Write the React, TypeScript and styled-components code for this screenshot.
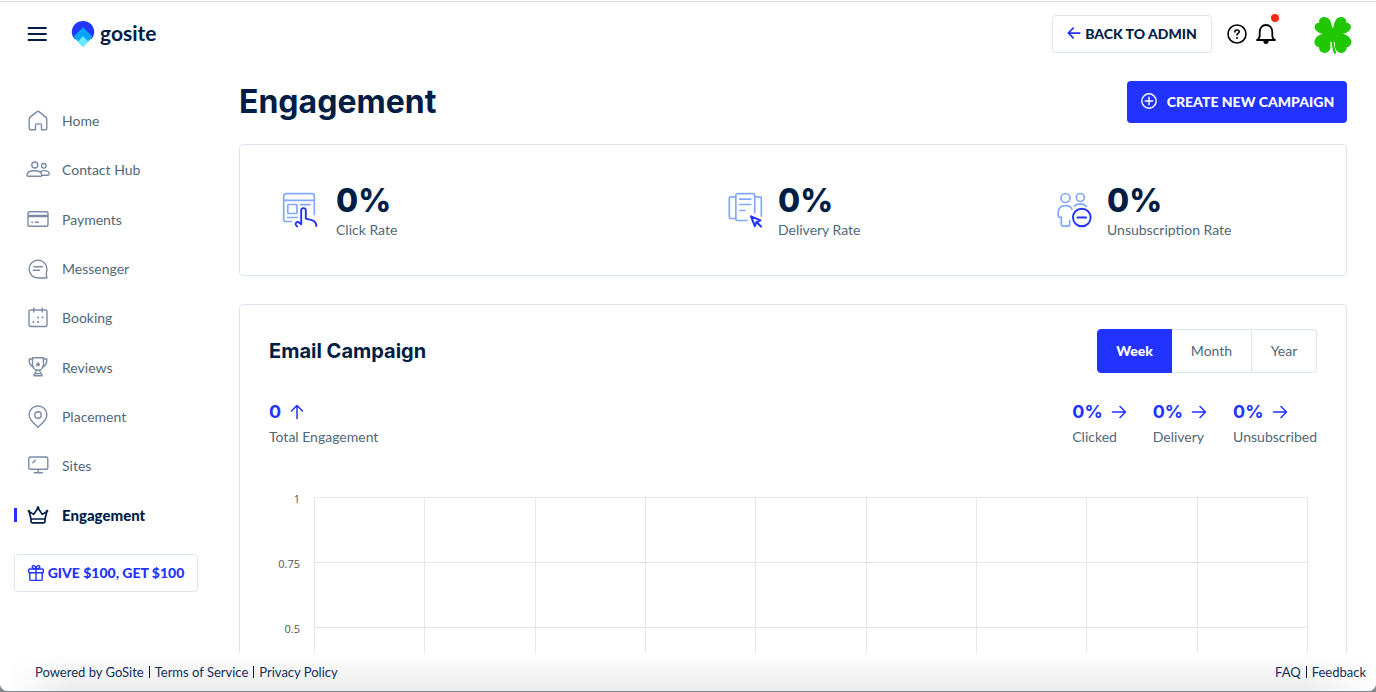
import React, { useState } from "react";
import styled, { createGlobalStyle } from "styled-components";

const color = {
  navy: "#001e45",
  blue: "#2233ff",
  slate: "#4f6878",
  icon: "#7c8ba5",
  line: "#dde5ee",
  grid: "#e6e6e6",
};

const headingFont = `Inter, "Liberation Sans", sans-serif`;

const GlobalStyle = createGlobalStyle`
  * { box-sizing: border-box; }
  body {
    margin: 0;
    background: #85878c;
    color: ${color.navy};
    font-family: Lato, "Liberation Sans", sans-serif;
    font-size: 14px;
  }
  button { font-family: inherit; cursor: pointer; }
  a { color: inherit; text-decoration: none; }
  h1, h2, p, ul { margin: 0; padding: 0; }
`;

const Page = styled.div`
  display: flex;
  flex-direction: column;
  height: calc(100vh - 1px);
  overflow: hidden;
  background: #fff;
  border-top: 1px solid #fff;
  border-radius: 0 0 8px 8px;
`;

const Header = styled.header`
  display: flex;
  align-items: center;
  flex: none;
  height: 68px;
  padding: 0 24px 4px 27px;
  border-top: 1px solid #d9dddc;
`;

const IconButton = styled.button`
  display: flex;
  padding: 0;
  border: 0;
  background: none;
  color: ${color.navy};
`;

const Logo = styled.a`
  display: flex;
  align-items: center;
  gap: 5px;
  margin-left: 24px;
  font-size: 21px;
  line-height: 26px;
  font-weight: 700;
  span { padding-bottom: 2px; }
`;

const HeaderActions = styled.div`
  display: flex;
  align-items: center;
  margin-left: auto;
`;

const OutlineButton = styled.button<{ $tone: string; $width: number }>`
  display: flex;
  align-items: center;
  justify-content: center;
  gap: 4px;
  width: ${(p) => p.$width}px;
  height: 38px;
  padding: 0 0 1px;
  border: 1px solid ${color.line};
  border-radius: 4px;
  background: #fff;
  color: ${(p) => p.$tone};
  font-size: 14px;
  font-weight: 900;
  svg { color: ${color.blue}; }
`;

const HelpButton = styled(IconButton)`
  margin-left: 14px;
  color: #000;
`;

const BellButton = styled(IconButton)`
  position: relative;
  margin: 0 37px 0 7px;
  color: #000;
`;

const Dot = styled.span`
  position: absolute;
  top: -9px;
  right: -2px;
  width: 8px;
  height: 8px;
  border-radius: 50%;
  background: #ff2a12;
`;

const Body = styled.div`
  display: flex;
  flex: 1;
  min-height: 0;
`;

const Sidebar = styled.aside`
  flex: none;
  width: 239px;
  padding: 27px 40px 0 14px;
`;

const NavList = styled.ul`
  display: flex;
  flex-direction: column;
  height: 444px;
  list-style: none;
`;

const NavItem = styled.li`
  display: flex;
  flex: 1;
`;

const NavLink = styled.a<{ $active: boolean }>`
  display: flex;
  align-items: center;
  flex: 1;
  color: ${(p) => (p.$active ? color.navy : color.slate)};
  font-size: ${(p) => (p.$active ? 15 : 14)}px;
  font-weight: ${(p) => (p.$active ? 900 : 400)};
  &::before {
    content: "";
    width: 3px;
    height: 14px;
    margin-right: 9px;
    background: ${(p) => (p.$active ? color.blue : "transparent")};
  }
  svg {
    margin-right: 12px;
    color: ${(p) => (p.$active ? color.navy : color.icon)};
  }
`;

const GiftRow = styled.div`
  padding-top: 14px;
`;

const Main = styled.main`
  flex: 1;
  min-width: 0;
  overflow: hidden;
  padding: 12px 29px 0 0;
`;

const TitleRow = styled.div`
  display: flex;
  align-items: center;
  justify-content: space-between;
  height: 42px;
  margin-bottom: 21px;
`;

const Title = styled.h1`
  padding-bottom: 1px;
  font-family: ${headingFont};
  font-size: 32px;
  line-height: 40px;
  font-weight: 700;
`;

const PrimaryButton = styled.button`
  display: flex;
  align-items: center;
  justify-content: center;
  gap: 9px;
  width: 220px;
  height: 42px;
  padding: 0 0 2px;
  border: 0;
  border-radius: 4px;
  background: ${color.blue};
  color: #fff;
  font-size: 14px;
  font-weight: 900;
`;

const Card = styled.section`
  border: 1px solid ${color.line};
  border-radius: 4px;
  background: #fff;
`;

const RatesCard = styled(Card)`
  display: grid;
  grid-template-columns: 446fr 329fr 247fr;
  align-items: center;
  height: 132px;
  margin-bottom: 28px;
  padding: 0 42px;
`;

const Rate = styled.div`
  display: flex;
  align-items: center;
  gap: 15px;
`;

const RateValue = styled.p`
  padding-top: 2px;
  font-family: ${headingFont};
  font-size: 32px;
  line-height: 38px;
  font-weight: 800;
`;

const Label = styled.p`
  color: ${color.slate};
  font-size: 14px;
  line-height: 20px;
`;

const CampaignCard = styled(Card)`
  padding: 24px 29px 40px;
`;

const CardHead = styled.div`
  display: flex;
  align-items: center;
  justify-content: space-between;
  margin-bottom: 28px;
`;

const CardTitle = styled.h2`
  padding-bottom: 1px;
  font-family: ${headingFont};
  font-size: 20px;
  line-height: 24px;
  font-weight: 700;
`;

const Periods = styled.div`
  display: grid;
  grid-template-columns: 75px 80px 65px;
  height: 44px;
`;

const Period = styled.button<{ $active: boolean }>`
  padding: 0 0 2px;
  border: 1px solid ${(p) => (p.$active ? color.blue : color.line)};
  border-left-width: ${(p) => (p.$active ? 1 : 0)}px;
  background: ${(p) => (p.$active ? color.blue : "#fff")};
  color: ${(p) => (p.$active ? "#fff" : color.slate)};
  font-size: 14px;
  font-weight: ${(p) => (p.$active ? 900 : 400)};
  &:first-child { border-radius: 4px 0 0 4px; }
  &:last-child { border-radius: 0 4px 4px 0; }
`;

const Totals = styled.div`
  display: flex;
  justify-content: space-between;
  margin-bottom: 50px;
`;

const TotalsGroup = styled.div`
  display: flex;
  gap: 26px;
`;

const TotalValue = styled.p`
  display: flex;
  align-items: center;
  gap: 8px;
  margin-bottom: 4px;
  color: ${color.blue};
  font-family: ${headingFont};
  font-size: 18px;
  line-height: 22px;
  font-weight: 700;
`;

const Chart = styled.div`
  display: flex;
  gap: 14px;
  padding-right: 9px;
`;

const Axis = styled.div`
  flex: none;
  width: 31px;
  color: #555;
  font-family: "Open Sans", sans-serif;
  font-size: 11px;
  line-height: 16px;
  text-align: right;
`;

const Tick = styled.div`
  display: flex;
  justify-content: flex-end;
  height: 65px;
  span { margin-top: -6px; }
`;

const Plot = styled.div`
  display: grid;
  flex: 1;
  grid-template-columns: repeat(9, 1fr);
  grid-auto-rows: 65px;
  border-right: 1px solid ${color.grid};
  border-bottom: 1px solid ${color.grid};
`;

const Cell = styled.div`
  border-top: 1px solid ${color.grid};
  border-left: 1px solid ${color.grid};
`;

const Footer = styled.footer`
  display: flex;
  align-items: center;
  justify-content: space-between;
  flex: none;
  height: 38px;
  padding: 0 10px 0 35px;
  background:
    linear-gradient(90deg, #fff 8px, transparent 70px, transparent calc(100% - 76px), #fff),
    linear-gradient(180deg, #fff, #ebebeb);
  color: #12305a;
  font-size: 13px;
`;

const FooterLinks = styled.div`
  display: flex;
  align-items: center;
  gap: 5px;
`;

const Bar = styled.span`
  width: 1px;
  height: 12px;
  background: ${color.navy};
`;

type SvgProps = { size?: number; w?: number; h?: number; box?: string; sw?: number; children: React.ReactNode };

const Svg = ({ size = 24, w, h, box = "0 0 24 24", sw = 1.4, children }: SvgProps) => (
  <svg
    width={w ?? size}
    height={h ?? size}
    viewBox={box}
    fill="none"
    stroke="currentColor"
    strokeWidth={sw}
    strokeLinecap="round"
    strokeLinejoin="round"
    aria-hidden="true"
  >
    {children}
  </svg>
);

const HomeIcon = () => (
  <Svg><path d="M3.200 10.200c0-.9.3-1.500 1-2.100l6.900-5.500c.6-.4 1.200-.4 1.800 0l6.900 5.500c.7.6 1 1.200 1 2.100v9c0 1-.6 1.500-1.500 1.500h-3.800v-4.500c0-.9-.3-1.300-1.200-1.300h-3.600c-.9 0-1.200.4-1.200 1.300v4.500H4.700c-.9 0-1.500-.5-1.500-1.500z" /></Svg>
);
const ContactsIcon = () => (
  <Svg>
    <circle cx="8.800" cy="7" r="3" />
    <circle cx="17.800" cy="7.800" r="2.300" />
    <path d="M1 17.200c0-3 3.200-4.400 7.400-4.400s7.400 1.400 7.400 4.400c0 .7-.5 1.100-1.200 1.100H2.200c-.7 0-1.200-.4-1.200-1.100z" />
    <path d="M14.600 13.600c1-.7 2.200-1 3.600-1 2.900 0 5 1.500 5 3.500 0 .7-.4 1.100-1.100 1.100h-6.200" />
  </Svg>
);
const CardIcon = () => (
  <Svg>
    <rect x="2" y="4.800" width="20" height="14.400" rx="1.800" />
    <path d="M2 9h20" strokeWidth="2.600" strokeLinecap="butt" />
    <path d="M5.800 15.300h.6M9.400 15.300h3" />
  </Svg>
);
const MessengerIcon = () => (
  <Svg>
    <path d="M20.900 12.100A8.900 8.900 0 1 0 12 21h8.200c.6 0 .9-.4.7-.9-.5-1.200-.8-2-.6-3.500.4-1.400.6-2.900.6-4.500z" />
    <path d="M8 9.700h8.500M7.200 13.300h6.300" />
  </Svg>
);
const BookingIcon = () => (
  <Svg>
    <rect x="3" y="4" width="18" height="16.500" rx="1.500" />
    <path d="M7.800 2v4M16.200 2v4" />
    <path d="M12 11.500h.1M16.500 11.500h.1M7.300 16h.1M12 16h.1" strokeWidth="2" />
  </Svg>
);
const TrophyIcon = () => (
  <Svg>
    <path d="M6.500 2.800h11v6.400c0 3.600-2.300 6.100-5.500 6.100s-5.500-2.500-5.500-6.100z" />
    <path d="M6.500 4H3.200c-.3 3.600 1 6.800 4.500 8.200M17.500 4h3.300c.3 3.600-1 6.800-4.500 8.200" />
    <path d="M10.300 15.300c0 1.400-.3 2.400-1.500 3.200M13.700 15.300c0 1.400.3 2.400 1.500 3.200M8 20.800c0-1.400.5-2.200 1.500-2.200h5c1 0 1.500.8 1.500 2.200z" />
    <path d="M12 7.500l.6 1.300 1.400.1-1.100.9.4 1.400-1.300-.8-1.300.8.4-1.400-1.100-.9 1.400-.1z" fill="currentColor" strokeWidth=".8" />
  </Svg>
);
const PinIcon = () => (
  <Svg>
    <path d="M12 22.300c-1.700-2.100-8.900-6.800-8.900-12.400a8.900 8.900 0 0 1 17.800 0c0 5.600-7.200 10.300-8.900 12.400z" />
    <circle cx="12" cy="10" r="3.200" />
  </Svg>
);
const SitesIcon = () => (
  <Svg>
    <rect x="2.800" y="3" width="19" height="12.300" rx="1.500" />
    <path d="M12.300 15.500v2.900M8.200 18.700h8.200M6.800 8.800l2.600-2.600" />
  </Svg>
);
const CrownIcon = () => (
  <Svg sw={1.700}>
    <path d="M5 16L3.200 8.600l4.500 2.800L12 5l4.300 6.400 4.500-2.800L19 16zM5 16v2.600c0 .8.5 1.200 1.300 1.200h11.400c.8 0 1.300-.4 1.300-1.200V16" />
    <circle cx="12" cy="4.600" r=".6" /><circle cx="2.900" cy="8.100" r=".4" /><circle cx="21.100" cy="8.100" r=".4" />
  </Svg>
);
const GiftIcon = () => (
  <Svg w={16} h={18} box="1 0 16 18" sw={1.400}>
    <rect x="1.700" y="5" width="14.600" height="3.800" rx=".8" />
    <path d="M2.800 8.800v6.400c0 .8.4 1.200 1.200 1.200h10c.8 0 1.200-.4 1.200-1.200V8.800M9 5v11.400" />
    <path d="M9 4.900C7.500 4.900 5.200 4.700 5.200 3.100 5.200 1 8.600.8 9 4.900zM9 4.900c1.500 0 3.800-.2 3.800-1.800C12.800 1 9.400.8 9 4.900z" />
  </Svg>
);

const MenuIcon = () => (
  <Svg w={20} h={20} box="0 0 20 20" sw={1.800}><path d="M1.500 4h17.500M1.500 10h17.500M1.500 16h17.500" /></Svg>
);
const LogoMark = () => (
  <svg width="24" height="28" viewBox="0 0 24 28" aria-hidden="true">
    <path d="M12 1A11 11 0 0 0 3.900 19.600L12 11.500l8.100 8.100A11 11 0 0 0 12 1z" fill="#2238ff" />
    <path d="M12 7.200L2.700 16.500c.4.900 1 1.700 1.700 2.500l3 3L12 17l4.600 5 3-3c.7-.8 1.300-1.600 1.700-2.500z" fill="#08a5ff" />
    <path d="M12 16.200L6.600 21.700 12 27.300l5.400-5.600z" fill="#64eaff" />
  </svg>
);
const ArrowIcon = ({ turn = 0, size = 16 }: { turn?: number; size?: number }) => (
  <Svg size={size} box="0 0 16 16" sw={size < 16 ? 2 : 1.5}>
    <path transform={`rotate(${turn} 8 8)`} d="M1.500 8h13M9 2.500L14.500 8 9 13.500" />
  </Svg>
);
const HelpIcon = () => (
  <Svg size={22} box="0 0 22 22" sw={1.600}>
    <circle cx="11" cy="11" r="9" />
    <path d="M8.800 8.900c.1-1.200.9-1.900 2.200-1.900s2.200.7 2.200 1.800c0 1.500-2.200 1.600-2.200 3.200" />
    <path d="M11 14.900h.01" strokeWidth="2" />
  </Svg>
);
const BellIcon = () => (
  <Svg size={22} box="0 0 22 22" sw={1.800}>
    <path d="M2 17h18c-1.800-1-2.700-2.200-2.700-4.500V9c0-4-2.400-7-6.300-7S4.700 5 4.700 9v3.500C4.700 14.800 3.800 16 2 17z" />
    <path d="M9.200 18.500h3.600c-.2 1.200-.8 1.700-1.800 1.700s-1.600-.5-1.800-1.700z" fill="currentColor" />
  </Svg>
);
const Clover = () => (
  <svg width="38" height="42" viewBox="0 -3 38 42" role="img" aria-label="Account">
    <g fill="#22c703">
      <path d="M18.500 19C11 19 2.600 17.500.9 12.600-.2 9 2 6.700 5.200 6.700 4.600 3.600 7 1 10.700 1.100 17 1.600 18.500 9 18.500 19z" />
      <path d="M19 19c7.500 0 16-1.500 17.600-6.400 1.100-3.600-1.100-5.900-4.300-5.900.6-3.100-1.800-5.700-5.500-5.600C20.500 1.600 19 9 19 19z" />
      <path d="M18.500 17C11 16 2.500 18.500.6 24.500c-.8 3.400 1.200 6.500 4.500 6.800-.1 3.700 2.700 6 6.200 5.600 6-.9 7.200-9 7.200-19.900z" />
      <path d="M19 17c7.500-1 16.300 1.500 18.200 7.500.8 3.400-1.200 6.500-4.500 6.800.1 3.700-2.700 6-6.200 5.600-5.700-.9-7.500-9-7.500-19.900z" />
      <circle cx="18.800" cy="17.500" r="6" />
    </g>
    <path d="M18.600 26c-.3 5 .3 8 2.200 12" fill="none" stroke="#fff" strokeWidth="4.500" />
    <path d="M18.800 18c-.8 8 .2 14 2.600 19.600" fill="none" stroke="#22c703" strokeWidth="2.200" />
  </svg>
);
const PlusIcon = () => (
  <Svg size={18} box="0 0 18 18" sw={1.400}><circle cx="9" cy="9" r="7.200" /><path d="M9 5.300v7.400M5.300 9h7.400" /></Svg>
);

const ClickIcon = () => (
  <Svg w={39} h={36} box="0 0 39 36" sw={1.700}>
    <g stroke="#82a8ff">
      <path d="M9.500 29.500H4c-1.500 0-2.300-.8-2.300-2.300V4c0-1.500.8-2.300 2.300-2.300h26c1.500 0 2.300.8 2.300 2.300v18.500M1.700 8.300h30.600" />
      <rect x="5.800" y="12.500" width="9.200" height="9" rx=".8" />
      <path d="M18.500 12.700h9.500M5.800 25.500h9.500" />
    </g>
    <path stroke="#2233ff" strokeWidth="1.900" d="M15.200 34.500c-1.600-1-2-2.700-1-3.800 1-1 2.300-.7 3.500.3l1.500 1.200V18.500c0-3.200 4.600-3.200 4.600 0v8.200l6 1.500c3.300.9 4.500 2.500 4.500 5.800" />
  </Svg>
);
const DeliveryIcon = () => (
  <Svg w={35} h={36} box="0 0 35 36" sw={1.700}>
    <g stroke="#82a8ff">
      <path d="M19 28.500H9.500c-1 0-1.700-.7-1.700-1.700V3.400c0-1 .7-1.700 1.700-1.700h15.500c1 0 1.700.7 1.700 1.700v17.400" />
      <path d="M7.800 26.500H3c-1 0-1.700-.7-1.700-1.700V6.500c0-1 .7-1.700 1.700-1.700h4.800M26.700 4.800h4.900c1 0 1.700.7 1.700 1.700v17.500" />
      <path d="M11.700 7.200h11M11.700 12.500h11M11.700 18.500h5" />
    </g>
    <path stroke="#2233ff" strokeWidth="2" d="M23 24.300l9.500 4-4 1.700-1.700 4.200zM29 30.500l4 4" />
  </Svg>
);
const UnsubscribeIcon = () => (
  <Svg w={35} h={36} box="0 0 35 36" sw={1.700}>
    <g stroke="#82a8ff">
      <circle cx="8.500" cy="6" r="4.500" />
      <circle cx="23.300" cy="5.500" r="4" />
      <path d="M15 17.300c-1-2.700-3.300-3.700-6.500-3.700-4.700 0-7.300 2.500-7.300 7v3.200c0 1 .6 1.500 1.700 1.500h1.400v7c0 1.200.6 1.900 1.800 1.900h4.800c1.200 0 1.800-.7 1.800-1.900v-4" />
      <path d="M17.500 14.200c1.200-1.600 3.200-2.400 5.800-2.400s4.600.8 6 2.700" />
    </g>
    <g stroke="#2233ff" strokeWidth="1.900"><circle cx="24.800" cy="25.500" r="8.800" /><path d="M20.500 25.500h8.600" /></g>
  </Svg>
);

const navItems = [
  { label: "Home", Icon: HomeIcon },
  { label: "Contact Hub", Icon: ContactsIcon },
  { label: "Payments", Icon: CardIcon },
  { label: "Messenger", Icon: MessengerIcon },
  { label: "Booking", Icon: BookingIcon },
  { label: "Reviews", Icon: TrophyIcon },
  { label: "Placement", Icon: PinIcon },
  { label: "Sites", Icon: SitesIcon },
  { label: "Engagement", Icon: CrownIcon },
];

const rates = [
  { label: "Click Rate", Icon: ClickIcon },
  { label: "Delivery Rate", Icon: DeliveryIcon },
  { label: "Unsubscription Rate", Icon: UnsubscribeIcon },
];

const periods = ["Week", "Month", "Year"];
const ticks = ["1", "0.75", "0.5"];

export default function App() {
  const [period, setPeriod] = useState("Week");

  return (
    <>
      <GlobalStyle />
      <Page>
        <Header>
          <IconButton aria-label="Menu"><MenuIcon /></IconButton>
          <Logo href="#home"><LogoMark /><span>gosite</span></Logo>
          <HeaderActions>
            <OutlineButton $tone={color.navy} $width={160}>
              <ArrowIcon turn={180} size={14} />BACK TO ADMIN
            </OutlineButton>
            <HelpButton aria-label="Help"><HelpIcon /></HelpButton>
            <BellButton aria-label="Notifications"><BellIcon /><Dot /></BellButton>
            <Clover />
          </HeaderActions>
        </Header>

        <Body>
          <Sidebar>
            <nav>
              <NavList>
                {navItems.map(({ label, Icon }) => (
                  <NavItem key={label}>
                    <NavLink href="#nav" $active={label === "Engagement"}><Icon />{label}</NavLink>
                  </NavItem>
                ))}
              </NavList>
            </nav>
            <GiftRow>
              <OutlineButton $tone={color.blue} $width={184}><GiftIcon />GIVE $100, GET $100</OutlineButton>
            </GiftRow>
          </Sidebar>

          <Main>
            <TitleRow>
              <Title>Engagement</Title>
              <PrimaryButton><PlusIcon />CREATE NEW CAMPAIGN</PrimaryButton>
            </TitleRow>

            <RatesCard>
              {rates.map(({ label, Icon }) => (
                <Rate key={label}>
                  <Icon />
                  <div>
                    <RateValue>0%</RateValue>
                    <Label>{label}</Label>
                  </div>
                </Rate>
              ))}
            </RatesCard>

            <CampaignCard>
              <CardHead>
                <CardTitle>Email Campaign</CardTitle>
                <Periods>
                  {periods.map((name) => (
                    <Period key={name} $active={name === period} onClick={() => setPeriod(name)}>{name}</Period>
                  ))}
                </Periods>
              </CardHead>
              <Totals>
                <div>
                  <TotalValue>0 <ArrowIcon turn={-90} /></TotalValue>
                  <Label>Total Engagement</Label>
                </div>
                <TotalsGroup>
                  {["Clicked", "Delivery", "Unsubscribed"].map((name) => (
                    <div key={name}>
                      <TotalValue>0% <ArrowIcon /></TotalValue>
                      <Label>{name}</Label>
                    </div>
                  ))}
                </TotalsGroup>
              </Totals>
              <Chart>
                <Axis>
                  {ticks.map((tick) => <Tick key={tick}><span>{tick}</span></Tick>)}
                </Axis>
                <Plot>
                  {Array.from({ length: 36 }, (_, i) => <Cell key={i} />)}
                </Plot>
              </Chart>
            </CampaignCard>
          </Main>
        </Body>

        <Footer>
          <FooterLinks>
            <span>Powered by GoSite</span><Bar />
            <a href="#terms">Terms of Service</a><Bar />
            <a href="#privacy">Privacy Policy</a>
          </FooterLinks>
          <FooterLinks>
            <a href="#faq">FAQ</a><Bar />
            <a href="#feedback">Feedback</a>
          </FooterLinks>
        </Footer>
      </Page>
    </>
  );
}
